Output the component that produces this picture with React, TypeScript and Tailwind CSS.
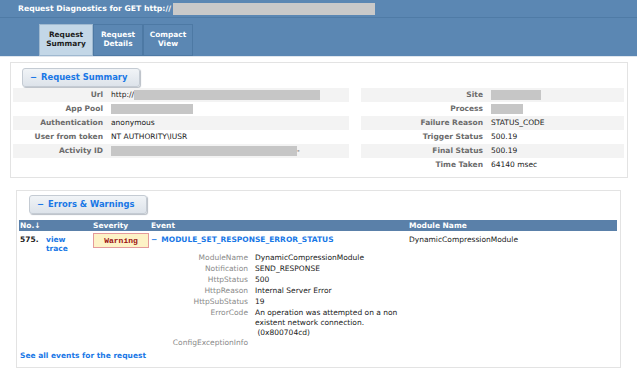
import React from "react";

const font = { fontFamily: '"DejaVu Sans", Verdana, sans-serif' };

const leftRows: { label: string; value?: string; bar?: number; tail?: string }[] = [
  { label: "Url", value: "http://", bar: 186 },
  { label: "App Pool", bar: 82 },
  { label: "Authentication", value: "anonymous" },
  { label: "User from token", value: "NT AUTHORITY\\IUSR" },
  { label: "Activity ID", bar: 186, tail: "-" },
];

const rightRows: { label: string; value?: string; bar?: number }[] = [
  { label: "Site", bar: 50 },
  { label: "Process", bar: 32 },
  { label: "Failure Reason", value: "STATUS_CODE" },
  { label: "Trigger Status", value: "500.19" },
  { label: "Final Status", value: "500.19" },
  { label: "Time Taken", value: "64140 msec" },
];

const details: { label: string; lines: string[] }[] = [
  { label: "ModuleName", lines: ["DynamicCompressionModule"] },
  { label: "Notification", lines: ["SEND_RESPONSE"] },
  { label: "HttpStatus", lines: ["500"] },
  { label: "HttpReason", lines: ["Internal Server Error"] },
  { label: "HttpSubStatus", lines: ["19"] },
  {
    label: "ErrorCode",
    lines: ["An operation was attempted on a non", "existent network connection.", "\u00a0(0x800704cd)"],
  },
  { label: "ConfigExceptionInfo", lines: [""] },
];

function Tab({ top, bottom, active }: { top: string; bottom: string; active?: boolean }) {
  return (
    <div
      className={
        "flex h-[32px] flex-col items-center justify-start border pt-[5px] text-[7.4px] font-bold leading-[9px] " +
        (active
          ? "w-[54px] border-[#9fb9d0] bg-[#c3d7e7] text-[#1c1c1c]"
          : "w-[50px] border-[#4d79a4] bg-[#5b87b3] text-white")
      }
    >
      <span>{top}</span>
      <span>{bottom}</span>
    </div>
  );
}

function SectionButton({ label, width }: { label: string; width: string }) {
  return (
    <div
      className={
        "flex h-[19px] items-center rounded-[3px] border border-[#c4cbd3] bg-gradient-to-b from-[#f1f4f7] to-[#dde3ea] pl-[7px] text-[8.4px] font-bold text-[#1877e6] shadow-[1px_1px_1px_#b8bec6] " +
        width
      }
    >
      <span className="mr-[4px]">&minus;</span>
      {label}
    </div>
  );
}

function Bar({ w }: { w: number }) {
  return <span className="inline-block h-[10px] bg-[#c6c6c6] align-middle" style={{ width: w }} />;
}

export default function App() {
  return (
    <div className="h-[377px] w-[637px] overflow-hidden bg-white text-[#1a1a1a]" style={font}>
      <header className="bg-[#5b87b3]">
        <div className="flex h-[18px] items-center border-b border-[#4f7ba6] pl-[18px] text-[7.7px] font-bold text-white">
          <span>Request Diagnostics for GET http://</span>
          <span className="ml-[2px] inline-block h-[12px] w-[202px] bg-[#c9c9c9]" />
        </div>
        <div className="flex h-[38px] items-end pl-[39px]">
          <Tab top="Request" bottom="Summary" active />
          <Tab top="Request" bottom="Details" />
          <Tab top="Compact" bottom="View" />
        </div>
      </header>
      <div className="h-[1px] bg-[#dfe6ee]" />

      <section className="ml-[10px] mt-[5px] h-[116px] w-[618px] border border-[#e3e3e3]">
        <div className="ml-[11px] mt-[5px]">
          <SectionButton label="Request Summary" width="w-[118px]" />
        </div>
        <div className="mt-[1px] flex text-[7.5px]">
          <div className="ml-[2px] w-[336px]">
            {leftRows.map((r, i) => (
              <div key={r.label} className={"flex h-[14px] items-center " + (i % 2 === 0 ? "bg-[#f3f3f3]" : "")}>
                <span className="w-[90px] text-right font-bold text-[#6b6b6b]">{r.label}</span>
                <span className="ml-[8px] flex items-center whitespace-nowrap">
                  {r.value}
                  {r.bar ? <Bar w={r.bar} /> : null}
                  {r.tail}
                </span>
              </div>
            ))}
          </div>
          <div className="ml-[12px] w-[263px]">
            {rightRows.map((r, i) => (
              <div key={r.label} className={"flex h-[14px] items-center " + (i % 2 === 0 ? "bg-[#f3f3f3]" : "")}>
                <span className="w-[122px] text-right font-bold text-[#6b6b6b]">{r.label}</span>
                <span className="ml-[8px] flex items-center whitespace-nowrap">
                  {r.value}
                  {r.bar ? <Bar w={r.bar} /> : null}
                </span>
              </div>
            ))}
          </div>
        </div>
      </section>

      <section className="ml-[16px] mt-[12px] h-[178px] w-[605px] border border-[#e3e3e3]">
        <div className="ml-[12px] mt-[4px]">
          <SectionButton label="Errors & Warnings" width="w-[118px]" />
        </div>
        <div className="ml-[2px] mt-[6px] w-[598px] text-[7.5px]">
          <div className="grid h-[11px] grid-cols-[74px_58px_258px_1fr] items-center bg-[#5a80a9] font-bold leading-[11px] text-white">
            <span className="pl-[1px]">No.&#8595;</span>
            <span>Severity</span>
            <span>Event</span>
            <span>Module Name</span>
          </div>
          <div className="grid grid-cols-[74px_58px_258px_1fr] pt-[2px] leading-[9px]">
            <div className="flex pl-[1px] pt-[2px] font-bold">
              <span className="w-[26px]">575.</span>
              <span className="text-[#1877e6]">
                view
                <br />
                trace
              </span>
            </div>
            <div>
              <span
                className="flex h-[15px] w-[56px] items-center justify-center border border-[#e49a9a] bg-[#fdf2c6] text-[8px] font-bold text-[#9b1010]"
                style={{ fontFamily: '"Liberation Mono", "Courier New", monospace' }}
              >
                Warning
              </span>
            </div>
            <div className="pt-[2px] font-bold text-[#1877e6]">
              <span className="mr-[4px]">&minus;</span>MODULE_SET_RESPONSE_ERROR_STATUS
            </div>
            <div className="pt-[2px]">DynamicCompressionModule</div>
          </div>
          <div className="mt-[0px]">
            {details.map((d) => (
              <div key={d.label} className="flex min-h-[11px] leading-[10px]">
                <span className="w-[229px] text-right text-[#8a8a8a]">{d.label}</span>
                <span className="ml-[7px] whitespace-pre">
                  {d.lines.map((l, i) => (
                    <div key={i}>{l}</div>
                  ))}
                </span>
              </div>
            ))}
          </div>
          <div className="mt-[1px] pl-[1px] font-bold text-[#1877e6]">See all events for the request</div>
        </div>
      </section>
    </div>
  );
}
